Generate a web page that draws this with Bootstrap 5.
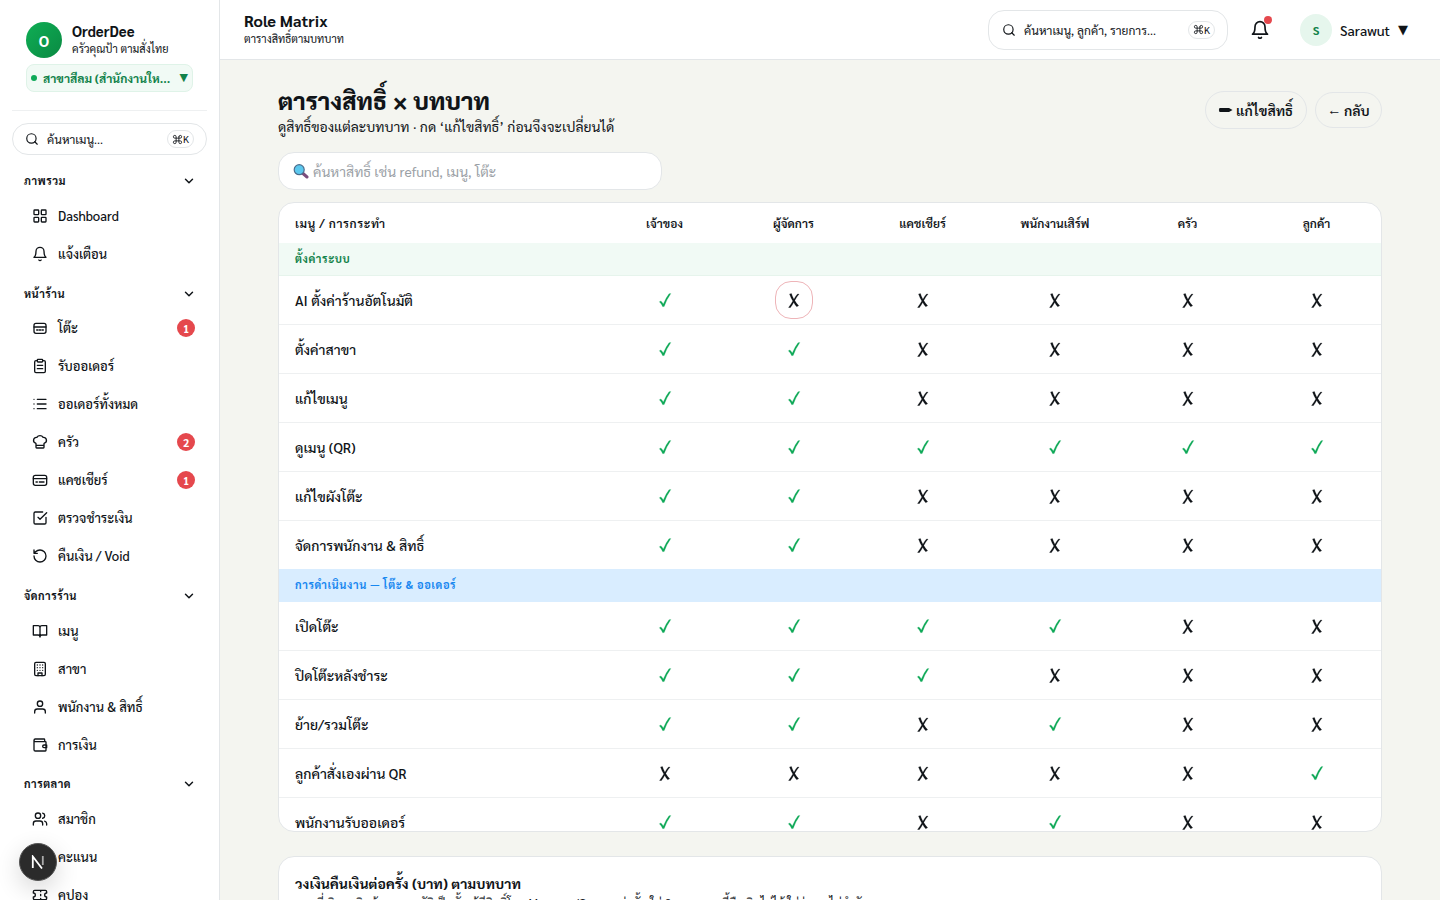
<!DOCTYPE html>
<html lang="th">
<head>
<meta charset="utf-8">
<meta name="viewport" content="width=device-width, initial-scale=1">
<title>OrderDee · Role Matrix</title>
<link href="https://cdn.jsdelivr.net/npm/bootstrap@5.3.0/dist/css/bootstrap.min.css" rel="stylesheet">
<style>
:root{--ink:#101418;--line:#e3e6e8;--green:#0fa958;--deep:#12824a;--red:#e5484d}
body{font-family:Sarabun,"Noto Sans Thai Looped","Noto Sans Thai","Open Sans","Noto Sans",sans-serif;color:var(--ink);background:#f4f5f0;font-size:14px;line-height:20px}
.shell{height:900px}
.side{width:220px;border-right:1px solid var(--line);padding:12px}
.brand{height:99px;border-bottom:1px solid #eef0f1;padding:10px 14px 0}
.brand-row{gap:10px}
.logo{width:36px;height:36px;background:linear-gradient(135deg,#0fae55,#0a8a42);font-size:15px;padding-top:1px}
.brand-text{margin-top:-3px}
.brand-name{font-size:14.500px;line-height:19px}
.brand-sub{font-size:11px;line-height:15px}
.branch{height:28px;margin-top:6px;border:1px solid #dff3e8;background:#f1faf5;border-radius:8px;color:var(--deep);font-size:12px;padding:0 4px;gap:6px}
.dot{width:6px;height:6px;background:var(--green)}
.caret{font-family:"DejaVu Sans",sans-serif;font-size:13px}
.caret.tiny{font-size:11px}
.find{height:32px;margin-top:12px;width:195px;border:1px solid var(--line);font-size:12px;padding:0 12px}
.kbd-hint{border:1px solid var(--line);border-radius:9px;font-size:10px;height:18px;line-height:16px;padding:0 4px}
#nav{margin-top:5.700px}
.sec{font-size:11px;letter-spacing:.5px;padding:5px 11px 0 12px;height:36.350px}
.item{height:38px;padding:0 12px 0 20px;gap:10px;font-size:13px;font-weight:500}
.pill{width:18px;height:18px;background:var(--red);font-size:11px;padding-top:1px}
.ic{width:16px;height:16px;fill:none;stroke:currentColor;stroke-width:2;stroke-linecap:round;stroke-linejoin:round;flex:none}
.ic.s14{width:14px;height:14px}
.ic.cmd{width:11px;height:11px;stroke-width:1.900}
.sec .ic{width:14px;height:14px;stroke-width:2.500}
.top{height:60px;border-bottom:1px solid var(--line);padding:0 32px 0 24px}
.top-text{padding-bottom:4px}
.top-title{font-size:16.150px;line-height:21px}
.top-sub{font-size:11px;line-height:15px}
.top-find{width:240px;height:40px;border:1px solid var(--line);border-radius:16px;font-size:12px;padding:0 12px 0 13px}
.bell-wrap{margin:0 30px 0 22px}
.ic.bell{width:20px;height:20px}
.alert-dot{width:8px;height:8px;background:var(--red);top:-4px;right:-2px}
.avatar{width:32px;height:32px;background:#e6f6ed;color:var(--deep);font-size:12px}
.user-name{font-weight:500}
.page{padding:27px 58px 0}
h1{font-size:24px;line-height:27px;font-weight:800}
.lead-in{font-size:14px;line-height:22px;margin-top:1px}
.acts{padding-bottom:4px}
.act{border:1px solid var(--line);border-radius:18px;font-size:14px;height:36px;padding:0 12px;white-space:pre}
.act.edit{height:38px;width:102px;border-radius:19px}
.act.back{width:67px}
.pen{width:15px;height:10px;margin-right:3px}
.filter{width:384px;height:38px;border:1px solid var(--line);border-radius:16px;color:#9ba1a6;font-size:14px;padding:0 14px;margin-top:15px}
.lens{width:16px;height:16px;margin-right:4px}
.panel{background:#fff;border:1px solid var(--line);border-radius:16px;overflow:hidden}
.matrix{height:630px;margin-top:12px}
.grid{display:grid;grid-template-columns:1fr 129px 129px 129px 136px 129px 129px;align-items:center;border-bottom:1px solid #eef0f1;height:49px;text-align:center;font-weight:500}
.grid>:first-child{text-align:left;padding-left:16px}
.grid.head{height:41px;font-size:12px;font-weight:600;border-color:#f1faf5}
.grid.head>:first-child{letter-spacing:.6px}
.grid.last-of{border-color:#d9edff}
.band{height:32px;padding:0 16px 1px;font-size:11px;font-weight:700;letter-spacing:.6px;background:#f1faf5;color:var(--deep);border-bottom:1px solid #e6f4ec}
.band.blue{background:#d9edff;color:#1887f0;border-color:#d9edff}
.state{width:14px;height:16px;fill:currentColor;stroke:currentColor;stroke-width:.2}
.yes{color:var(--green)}
.ring{display:inline-flex;width:38px;height:38px;border:1px solid #eeb4b8;border-radius:16px}
.limit{height:120px;margin-top:24px;padding:16px}
.limit-title{letter-spacing:.07px}
.limit-note{font-size:12px;line-height:18px}
.next{left:19px;top:843px;width:38px;height:38px;background:#2b2b2b;border:1px solid #555;box-shadow:0 8px 24px rgba(0,0,0,.16)}
</style>
</head>
<body>
<svg width="0" height="0" class="position-absolute"><defs>
<symbol id="search" viewBox="0 0 24 24"><circle cx="11" cy="11" r="8"/><path d="m21 21-4.3-4.3"/></symbol>
<symbol id="cmd" viewBox="0 0 24 24"><path d="M15 6v12a3 3 0 1 0 3-3H6a3 3 0 1 0 3 3V6a3 3 0 1 0-3 3h12a3 3 0 1 0-3-3"/></symbol>
<symbol id="down" viewBox="0 0 24 24"><path d="m6 9 6 6 6-6"/></symbol>
<symbol id="yes" viewBox="0 0 14 16"><path d="M1.300 9.800 2.900 8.900Q4.400 10.200 5.300 11.900 7.600 6.200 11 1.800L12.900 1.500Q8.800 7.200 6.200 14.500L4.700 14.700Q3.600 12 1.300 9.800Z"/></symbol>
<symbol id="no" viewBox="0.400 -0.700 14 16"><path d="M2.900 1.300 4.900.9Q5.700 4 7.300 6.500 8.900 3.200 11 1.200L12.500 1.400Q9.900 4.400 8.200 7.900 9.800 10.900 12.100 13L10.100 14Q8.400 12.300 7.100 9.800 5.500 12.800 3.700 15L1.900 14.900Q4.500 11.500 6.200 8.300 4.100 5 2.900 1.300Z"/></symbol>
<symbol id="dash" viewBox="0 0 24 24"><rect x="3" y="3" width="7" height="7" rx="1"/><rect x="14" y="3" width="7" height="7" rx="1"/><rect x="14" y="14" width="7" height="7" rx="1"/><rect x="3" y="14" width="7" height="7" rx="1"/></symbol>
<symbol id="bell" viewBox="0 0 24 24"><path d="M18 8A6 6 0 0 0 6 8c0 7-3 9-3 9h18s-3-2-3-9M10.300 21a2 2 0 0 0 3.400 0"/></symbol>
<symbol id="table" viewBox="0 0 24 24"><rect x="3" y="5" width="18" height="15" rx="3"/><path d="M3 10.500h18M7 15h2M11 15h2M15 15h2"/></symbol>
<symbol id="clip" viewBox="0 0 24 24"><rect x="8" y="2" width="8" height="4" rx="1"/><path d="M16 4h2a2 2 0 0 1 2 2v14a2 2 0 0 1-2 2H6a2 2 0 0 1-2-2V6a2 2 0 0 1 2-2h2M8 11h8M8 16h8"/></symbol>
<symbol id="list" viewBox="0 0 24 24"><path d="M8 5h13M8 12h13M8 19h13M3 5h.01M3 12h.01M3 19h.01"/></symbol>
<symbol id="chef" viewBox="0 0 24 24"><path d="M6.500 17h11M17 21a1 1 0 0 0 1-1v-5.300c0-.5.300-.8.700-1A4.500 4.500 0 0 0 16.700 5a5.500 5.500 0 0 0-9.400 0 4.500 4.500 0 0 0-2 8.700c.4.200.7.500.7 1V20a1 1 0 0 0 1 1Z"/></symbol>
<symbol id="card" viewBox="0 0 24 24"><rect x="2" y="5" width="20" height="15" rx="3"/><path d="M2 10h20M6 15h2M11 15h7"/></symbol>
<symbol id="check" viewBox="0 0 24 24"><path d="M21 11v8a2 2 0 0 1-2 2H5a2 2 0 0 1-2-2V5a2 2 0 0 1 2-2h11M9 11l3 3L22 4"/></symbol>
<symbol id="undo" viewBox="0 0 24 24"><path d="M3 12a9 9 0 1 0 9-9 9.700 9.700 0 0 0-6.700 2.700L3 8M3 3v5h5"/></symbol>
<symbol id="book" viewBox="0 0 24 24"><path d="M12 6v15M2 4h7a3 3 0 0 1 3 3 3 3 0 0 1 3-3h7v14h-7a3 3 0 0 0-3 3 3 3 0 0 0-3-3H2Z"/></symbol>
<symbol id="building" viewBox="0 0 24 24"><rect x="4" y="2" width="16" height="20" rx="2"/><path d="M9 22v-4h6v4M8 6h.01M12 6h.01M16 6h.01M8 10h.01M12 10h.01M16 10h.01M8 14h.01M12 14h.01M16 14h.01"/></symbol>
<symbol id="user" viewBox="0 0 24 24"><circle cx="12" cy="7" r="4"/><path d="M20 21v-2a4 4 0 0 0-4-4H8a4 4 0 0 0-4 4v2"/></symbol>
<symbol id="wallet" viewBox="0 0 24 24"><path d="M19 7V4a1 1 0 0 0-1-1H5a2 2 0 0 0 0 4h15a1 1 0 0 1 1 1v12a1 1 0 0 1-1 1H5a2 2 0 0 1-2-2V5M22 12h-4a2 2 0 0 0 0 4h4Z"/></symbol>
<symbol id="users" viewBox="0 0 24 24"><circle cx="9" cy="7" r="4"/><path d="M16 21v-2a4 4 0 0 0-4-4H6a4 4 0 0 0-4 4v2M22 21v-2a4 4 0 0 0-3-3.900M16 3.100a4 4 0 0 1 0 7.800"/></symbol>
<symbol id="star" viewBox="0 0 24 24"><path d="m12 2 3 6.500 7 1-5 5 1.200 7L12 18l-6.200 3.500L7 14.500l-5-5 7-1Z"/></symbol>
<symbol id="ticket" viewBox="0 0 24 24"><path d="M2 9a3 3 0 0 1 0 6v2a2 2 0 0 0 2 2h16a2 2 0 0 0 2-2v-2a3 3 0 0 1 0-6V7a2 2 0 0 0-2-2H4a2 2 0 0 0-2 2ZM13 5v2M13 17v2M13 11v2"/></symbol>
</defs></svg>
<div class="shell d-flex overflow-hidden">
<aside class="side bg-white flex-shrink-0 overflow-hidden">
  <div class="brand">
    <div class="brand-row d-flex align-items-center">
      <div class="logo rounded-circle text-white fw-bold d-flex align-items-center justify-content-center">O</div>
      <div class="brand-text text-nowrap"><div class="brand-name fw-bold">OrderDee</div><div class="brand-sub">ครัวคุณป้า ตามสั่งไทย</div></div>
    </div>
    <div class="branch d-flex align-items-center fw-bold text-nowrap"><span class="dot rounded-circle"></span><span>สาขาสีลม (สำนักงานให...</span><span class="caret tiny ms-auto">▼</span></div>
  </div>
  <div class="find rounded-pill d-flex align-items-center"><svg class="ic s14 me-2"><use href="#search"/></svg>ค้นหาเมนู...<span class="kbd-hint ms-auto d-flex align-items-center"><svg class="ic cmd"><use href="#cmd"/></svg><span>K</span></span></div>
  <nav id="nav"></nav>
</aside>
<main class="flex-grow-1 overflow-hidden">
  <header class="top bg-white d-flex align-items-center">
    <div class="top-text"><div class="top-title fw-bold">Role Matrix</div><div class="top-sub">ตารางสิทธิ์ตามบทบาท</div></div>
    <div class="top-find d-flex align-items-center ms-auto"><svg class="ic s14 me-2"><use href="#search"/></svg>ค้นหาเมนู, ลูกค้า, รายการ...<span class="kbd-hint ms-auto d-flex align-items-center"><svg class="ic cmd"><use href="#cmd"/></svg><span>K</span></span></div>
    <div class="bell-wrap position-relative d-flex"><svg class="ic bell"><use href="#bell"/></svg><span class="alert-dot rounded-circle position-absolute"></span></div>
    <div class="d-flex align-items-center gap-2"><span class="avatar rounded-circle fw-bold d-flex align-items-center justify-content-center">S</span><span class="user-name">Sarawut</span><span class="caret">▼</span></div>
  </header>
  <div class="page">
    <div class="d-flex justify-content-between align-items-center">
      <div><h1 class="mb-0">ตารางสิทธิ์ × บทบาท</h1><div class="lead-in">ดูสิทธิ์ของแต่ละบทบาท · กด ‘แก้ไขสิทธิ์’ ก่อนจึงจะเปลี่ยนได้</div></div>
      <div class="acts d-flex gap-2 align-items-center fw-semibold"><div class="act edit d-flex align-items-center"><svg class="pen" viewBox="0 0 15 10"><path d="M1.500 3h9.500l3.500 2L11 7H1.500Q.3 5 1.500 3Z" fill="#101418"/></svg>แก้ไขสิทธิ์</div><div class="act back d-flex align-items-center">← กลับ</div></div>
    </div>
    <div class="filter bg-white d-flex align-items-center"><svg class="lens" viewBox="0 0 16 16"><path d="m10 10.500 4 3.500" stroke="#7b4d7c" stroke-width="3" stroke-linecap="round"/><circle cx="6.200" cy="6.700" r="5" fill="#5cc8ee" stroke="#4a6d8c" stroke-width="1.200"/></svg>ค้นหาสิทธิ์ เช่น refund, เมนู, โต๊ะ</div>
    <section class="panel matrix" id="matrix"></section>
    <section class="panel limit"><div class="limit-title fw-bold">วงเงินคืนเงินต่อครั้ง (บาท) ตามบทบาท</div><div class="limit-note">ยอดที่เกินวงเงินต้องขออนุมัติเป็นขั้น ผู้มีสิทธิ์โดย Manager/Owner เท่านั้น ใส่ 0 = บทบาทนี้คืนเงินไม่ได้ ใส่ว่าง = ไม่จำกัด</div></section>
  </div>
</main>
</div>
<div class="next position-absolute rounded-circle d-flex align-items-center justify-content-center"><svg width="14" height="14" viewBox="0 0 14 14" fill="none" stroke-width="1.800"><path d="M1.800 13V1.500L11 13.500" stroke="#fff"/><path d="M11.800 1v9" stroke="#fff" stroke-opacity=".6"/></svg></div>
<script>
const menu=[['ภาพรวม',[['dash','Dashboard'],['bell','แจ้งเตือน']]],['หน้าร้าน',[['table','โต๊ะ',1],['clip','รับออเดอร์'],['list','ออเดอร์ทั้งหมด'],['chef','ครัว',2],['card','แคชเชียร์',1],['check','ตรวจชำระเงิน'],['undo','คืนเงิน / Void']]],['จัดการร้าน',[['book','เมนู'],['building','สาขา'],['user','พนักงาน & สิทธิ์'],['wallet','การเงิน']]],['การตลาด',[['users','สมาชิก'],['star','คะแนน'],['ticket','คูปอง']]]];
document.getElementById('nav').innerHTML=menu.map(([t,items])=>`<div class="sec d-flex align-items-center justify-content-between fw-bold">${t}<svg class="ic"><use href="#down"/></svg></div><div>${items.map(([i,l,n])=>`<div class="item d-flex align-items-center"><svg class="ic"><use href="#${i}"/></svg><span>${l}</span>${n?`<span class="pill rounded-circle text-white fw-bold ms-auto d-flex align-items-center justify-content-center">${n}</span>`:''}</div>`).join('')}</div>`).join('');
const rows=[['AI ตั้งค่าร้านอัตโนมัติ','100000'],['ตั้งค่าสาขา','110000'],['แก้ไขเมนู','110000'],['ดูเมนู (QR)','111111'],['แก้ไขผังโต๊ะ','110000'],['จัดการพนักงาน & สิทธิ์','110000'],'การดำเนินงาน — โต๊ะ & ออเดอร์',['เปิดโต๊ะ','111100'],['ปิดโต๊ะหลังชำระ','111000'],['ย้าย/รวมโต๊ะ','110100'],['ลูกค้าสั่งเองผ่าน QR','000001'],['พนักงานรับออเดอร์','110100']];
document.getElementById('matrix').innerHTML=`<div class="grid head"><div>เมนู / การกระทำ</div>${['เจ้าของ','ผู้จัดการ','แคชเชียร์','พนักงานเสิร์ฟ','ครัว','ลูกค้า'].map(x=>`<div>${x}</div>`).join('')}</div><div class="band d-flex align-items-center">ตั้งค่าระบบ</div>`+rows.map((r,k)=>typeof r==='string'?`<div class="band blue d-flex align-items-center">${r}</div>`:`<div class="grid ${typeof rows[k+1]==='string'?'last-of':''}"><div>${r[0]}</div>${[...r[1]].map((v,j)=>`<div class="d-flex justify-content-center ${v==='1'?'yes':''}"><span class="d-flex ${k===0&&j===1?'ring align-items-center justify-content-center':''}"><svg class="state" role="img" aria-label="${v==='1'?'อนุญาต':'ไม่อนุญาต'}"><use href="#${v==='1'?'yes':'no'}"/></svg></span></div>`).join('')}</div>`).join('');
</script>
<script src="https://cdn.jsdelivr.net/npm/bootstrap@5.3.0/dist/js/bootstrap.bundle.min.js"></script>
</body>
</html>
